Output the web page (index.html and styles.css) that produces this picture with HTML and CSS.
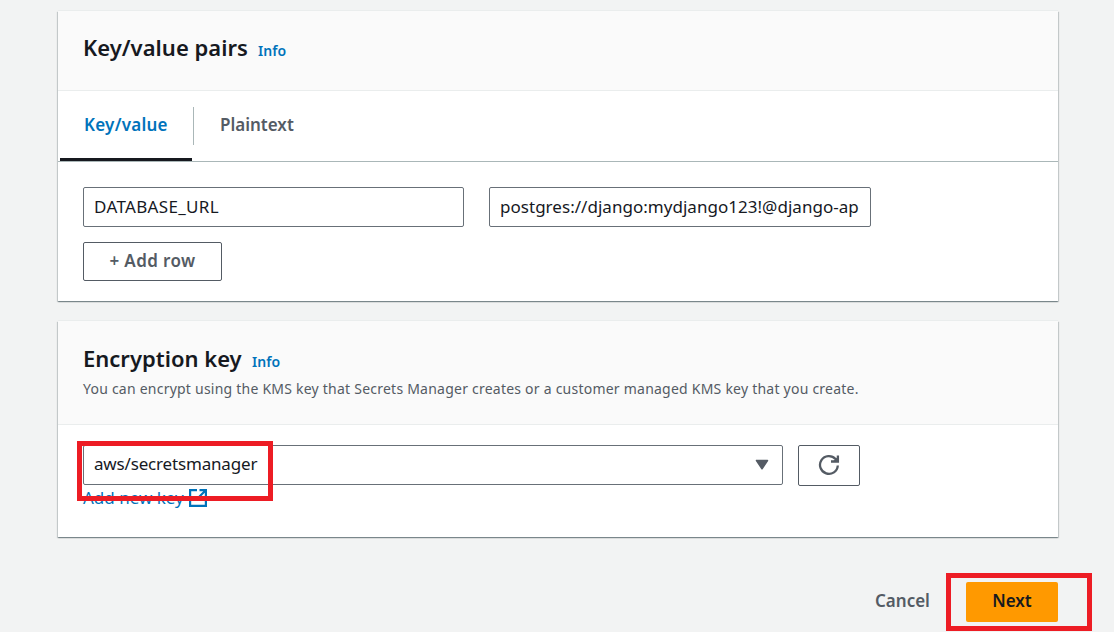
FILE: index.html
```html
<!DOCTYPE html>
<html lang="en">
<head>
<meta charset="utf-8">
<title>Store a new secret</title>
<link rel="stylesheet" href="styles.css">
</head>
<body>
<main class="page">
  <section class="card pairs">
    <header class="card-header">
      <div class="heading"><h2 class="title title-pairs">Key/value pairs</h2><a class="info">Info</a></div>
    </header>
    <nav class="tabs">
      <a class="tab active"><span class="tab-label label-kv">Key/value</span></a>
      <a class="tab"><span class="tab-label label-plain">Plaintext</span></a>
    </nav>
    <div class="card-body">
      <div class="row">
        <div class="field"><span class="value-name">DATABASE_URL</span></div>
        <div class="field field-url"><span class="value-url">postgres://django:mydjango123!@django-ap</span></div>
      </div>
      <button class="button add-row"><span>+ Add row</span></button>
    </div>
  </section>

  <section class="card encryption">
    <header class="card-header">
      <div class="heading"><h2 class="title title-key">Encryption key</h2><a class="info">Info</a></div>
      <p class="description"><span>You can encrypt using the KMS key that Secrets Manager creates or a customer managed KMS key that you create.</span></p>
    </header>
    <div class="card-body">
      <div class="row key-row">
        <div class="field select">
          <span class="value-key">aws/secretsmanager</span>
          <svg class="caret" width="14" height="11" viewBox="0 0 14 11"><path d="M1.5 1.500h11L7 9.800z" fill="#545b64" stroke="#545b64" stroke-width="1.500" stroke-linejoin="round"/></svg>
        </div>
        <button class="button refresh" aria-label="Refresh">
          <svg width="22" height="22" viewBox="0 0 22 22" fill="none" stroke="#545b64" stroke-width="2.300"><path d="M19.800 11.500a8.900 8.900 0 1 1-2.300-6.500l1.500 1.500"/><path d="M19.900 1.500v6H13"/><path d="M19.500 3v4h-4z" fill="#545b64" stroke="none"/></svg>
        </button>
      </div>
      <a class="new-key"><span class="new-key-label">Add new key</span><svg width="18" height="18" viewBox="0 0 18 18" fill="none" stroke="#0073bb" stroke-width="2.200"><path d="M8 1.100H1.100v15.800h15.800V10"/><path d="M10.500 1.100h6.400v6.400M16.500 1.500 7.500 10.500"/></svg></a>
      <div class="highlight highlight-key"></div>
    </div>
  </section>

  <footer class="actions">
    <a class="cancel"><span>Cancel</span></a>
    <div class="next-wrap">
      <button class="next"><span>Next</span></button>
      <div class="highlight highlight-next"></div>
    </div>
  </footer>
</main>
</body>
</html>
```
FILE: styles.css
```css
* { box-sizing: border-box; }
body {
  margin: 0;
  height: 632px;
  overflow: hidden;
  background: #f2f3f3;
  color: #16191f;
  font-family: "Noto Sans", "Open Sans", sans-serif;
}
.page { width: 1000px; margin-left: 58px; padding-top: 11px; }
.card {
  background: #fff;
  box-shadow: 0 1px 1px 0 rgba(0, 28, 36, .3), 1px 1px 1px 0 rgba(0, 28, 36, .15), -1px 1px 1px 0 rgba(0, 28, 36, .15), 0 -1px 0 0 #eaeded;
}
.pairs { height: 290px; }
.encryption { height: 216px; margin-top: 20px; position: relative; }
.card-header { background: #fafafa; border-bottom: 1px solid #eaeded; padding: 0 25px; }
.pairs .card-header { height: 80px; padding-top: 20px; }
.encryption .card-header { height: 104px; padding-top: 21px; }
.heading { display: flex; align-items: baseline; gap: 10px; height: 32px; }
.title { margin: 0; font-size: 22px; line-height: 32px; font-weight: 600; white-space: nowrap; }
.title-pairs { width: 165px; letter-spacing: .03px; }
.title-key { width: 159px; letter-spacing: 0; }
.info { color: #0073bb; font-size: 14px; font-weight: 600; letter-spacing: .1px; }
.description { margin: 5px 0 0; font-size: 14px; line-height: 20px; letter-spacing: .23px; color: #545b64; white-space: nowrap; }
.tabs { display: flex; height: 71px; border-bottom: 1px solid #aab7b8; padding-left: 2px; }
.tab { position: relative; padding: 21px 25px 0 24px; height: 70px; font-size: 17px; line-height: 26px; font-weight: 600; color: #545b64; white-space: nowrap; }
.label-kv { letter-spacing: .25px; }
.tab.active { width: 132px; color: #0073bb; border-bottom: 3px solid #16191f; margin-right: 4px; }
.tab.active::after { content: ""; position: absolute; right: -2px; top: 16px; width: 1px; height: 38px; background: #aab7b8; }
.card-body { padding: 25px 25px 0; }
.row { display: flex; gap: 25px; }
.field { display: flex; align-items: center; width: 381px; height: 40px; padding: 0 10px 1px; border: 1px solid #687078; border-radius: 2px; background: #fff; font-size: 17px; white-space: nowrap; }
.field-url { width: 382px; }
.value-name { letter-spacing: .33px; }
.value-url { letter-spacing: .03px; }
.value-key { letter-spacing: -.17px; padding-bottom: 2px; }
.button { display: flex; align-items: center; justify-content: center; padding: 0; border: 1px solid #545b64; border-radius: 2px; background: #fff; color: #545b64; font: 600 17px "Noto Sans", "Open Sans", sans-serif; }
.add-row { width: 139px; height: 39px; margin-top: 15px; padding-bottom: 2px; letter-spacing: .4px; }
.encryption .card-body { padding-top: 20px; }
.key-row { gap: 15px; height: 41px; }
.select { width: 700px; justify-content: space-between; padding-right: 13px; }
.refresh { width: 62px; height: 41px; padding-bottom: 2px; }
.new-key { display: flex; align-items: center; gap: 5px; height: 24px; color: #0073bb; font-size: 17px; line-height: 24px; white-space: nowrap; }
.new-key-label { width: 101px; }
.highlight { position: absolute; border: 5px solid #ed1c24; pointer-events: none; }
.highlight-key { left: 19px; top: 120px; width: 196px; height: 60px; }
.actions { display: flex; justify-content: flex-end; align-items: center; gap: 36px; height: 40px; margin-top: 45px; font-size: 17px; font-weight: 600; }
.cancel { color: #545b64; width: 55px; padding-bottom: 3px; white-space: nowrap; }
.next-wrap { position: relative; }
.next { display: block; width: 92px; height: 40px; border: 0; border-radius: 2px; background: #f90; color: #16191f; padding: 0 0 3px; font: 600 17px "Noto Sans", "Open Sans", sans-serif; }
.highlight-next { left: -20px; top: -9px; width: 146px; height: 58px; }
```
